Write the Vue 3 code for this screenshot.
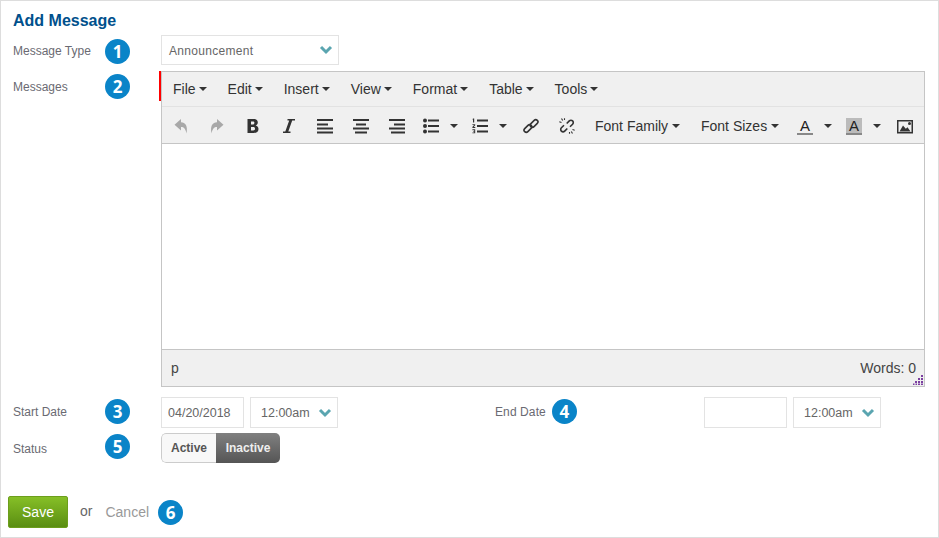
<script setup>
const menus = ['File', 'Edit', 'Insert', 'View', 'Format', 'Table', 'Tools']
</script>

<template>
  <div class="page">
    <h1 class="title">Add Message</h1>

    <div class="row row-type">
      <label class="label">Message Type</label>
      <span class="badge">1</span>
      <div class="select select-type">
        <span>Announcement</span>
        <svg class="chev" viewBox="0 0 14 10"><path d="M2 2l5 5 5-5" /></svg>
      </div>
    </div>

    <div class="row row-editor">
      <label class="label">Messages</label>
      <span class="badge">2</span>
      <div class="editor">
        <div class="menubar">
          <span v-for="m in menus" :key="m" class="menu">{{ m }}<i class="caret"></i></span>
        </div>
        <div class="toolbar">
          <span class="btn off">
            <svg viewBox="0 0 16 16"><path d="M8 1L1.500 6.800 8 12.500V9c3 0 4.500 1.800 5.500 6.500C15 8 12.500 4.500 8 4.300z" /></svg>
          </span>
          <span class="btn off">
            <svg viewBox="0 0 16 16"><path d="M8 1l6.500 5.800L8 12.500V9c-3 0-4.500 1.800-5.500 6.500C1 8 3.500 4.500 8 4.300z" /></svg>
          </span>
          <span class="btn">
            <svg viewBox="0 0 16 16"><path fill-rule="evenodd" d="M2.500 1h6c2.800 0 4.300 1.300 4.300 3.500 0 1.400-.8 2.500-2.100 3 1.700.4 2.800 1.700 2.800 3.400 0 2.600-1.900 4.100-4.800 4.100H2.500zM6 3.600v2.900h1.800c1 0 1.600-.6 1.600-1.500S8.800 3.600 7.800 3.600zM6 9v3.400h2.200c1.200 0 1.800-.7 1.800-1.700S9.400 9 8.200 9z" /></svg>
          </span>
          <span class="btn">
            <svg viewBox="0 0 16 16"><path d="M6.500 1H14v1.500H6.500zM2 13.500h7.500V15H2zM8.200 2.500h3L7.300 13.500h-3z" /></svg>
          </span>
          <span class="btn">
            <svg viewBox="0 0 16 16"><path d="M0 1h16v2H0zM0 5.500h11v2H0zM0 9.500h16v2H0zM0 13.500h16v2H0z" /></svg>
          </span>
          <span class="btn">
            <svg viewBox="0 0 16 16"><path d="M0 1h16v2H0zM3 5.500h10v2H3zM0 9.500h16v2H0zM2 13.500h12v2H2z" /></svg>
          </span>
          <span class="btn">
            <svg viewBox="0 0 16 16"><path d="M0 1h16v2H0zM5 5.500h11v2H5zM0 9.500h16v2H0zM2 13.500h14v2H2z" /></svg>
          </span>
          <span class="btn split list-bullet">
            <svg viewBox="0 0 16 16"><circle cx="2" cy="2.500" r="2" /><circle cx="2" cy="8" r="2" /><circle cx="2" cy="13.500" r="2" /><path d="M5 1.500h11v2H5zM5 7h11v2H5zM5 12.500h11v2H5z" /></svg>
            <i class="caret"></i>
          </span>
          <span class="btn split list-number">
            <svg viewBox="0 0 16 16"><path d="M1 .5h1.200v4H1V1.500H.4zM.4 6.200h2.800v1L1.700 9h1.600v.9H.4v-.9L2 7.100H.4zM.4 11.300h2.800v3.900H.4v-.8h1.800v-.8H1v-.7h1.200v-.7H.4zM5 1.500h11v2H5zM5 7h11v2H5zM5 12.500h11v2H5z" /></svg>
            <i class="caret"></i>
          </span>
          <span class="btn">
            <svg class="line" viewBox="0 0 16 16">
              <rect x="0.400" y="8.300" width="9" height="4.400" rx="2.200" transform="rotate(-45 4.900 10.500)" />
              <rect x="6.600" y="3.300" width="9" height="4.400" rx="2.200" transform="rotate(-45 11.100 5.500)" />
            </svg>
          </span>
          <span class="btn">
            <svg class="line" viewBox="0 0 16 16">
              <path d="M5 7.200L2.400 9.800a2.300 2.300 0 0 0 3.300 3.300l2.600-2.600M7.700 5.500l2.600-2.600a2.300 2.300 0 0 1 3.300 3.300L11 8.800" />
              <path d="M2.500.5l1.200 2M.3 3.800l2.200.7M5.500.3v1.700M13.500 15.500l-1.200-2M15.700 12.200l-2.200-.7M10.500 15.700V14" stroke-width="1.100" />
            </svg>
          </span>
          <span class="drop drop-family">Font Family<i class="caret"></i></span>
          <span class="drop drop-sizes">Font Sizes<i class="caret"></i></span>
          <span class="btn color color-fore"><b class="letter">A</b><i class="caret"></i></span>
          <span class="btn color color-back"><b class="letter shade">A</b><i class="caret"></i></span>
          <span class="btn">
            <svg viewBox="0 0 16 16"><path fill-rule="evenodd" d="M0 2h16v13.500H0zM1.500 3.500v10.500h13V3.500z" /><circle cx="12.500" cy="5.500" r="1.500" /><path d="M2.500 13.500l3.500-6 2.800 3.200 1.700-1.400 3 4.200z" /></svg>
          </span>
        </div>
        <div class="body"></div>
        <div class="statusbar">
          <span class="path">p</span>
          <span class="words">Words: 0</span>
          <svg class="grip" viewBox="0 0 10 10"><path d="M8 0h2v2H8zM5 3h2v2H5zM8 3h2v2H8zM2 6h2v2H2zM5 6h2v2H5zM8 6h2v2H8zM0 8.500h1.500V10H0zM2.500 8.500H4V10H2.500zM5 8.500h2V10H5zM8 8.500h2V10H8z" /></svg>
        </div>
      </div>
    </div>

    <div class="row row-dates">
      <label class="label">Start Date</label>
      <span class="badge">3</span>
      <input class="date" type="text" value="04/20/2018" />
      <div class="select select-time">
        <span>12:00am</span>
        <svg class="chev" viewBox="0 0 14 10"><path d="M2 2l5 5 5-5" /></svg>
      </div>
      <div class="end">
        <label class="label end-label">End Date</label>
        <span class="badge">4</span>
      </div>
      <input class="date" type="text" value="" />
      <div class="select select-time">
        <span>12:00am</span>
        <svg class="chev" viewBox="0 0 14 10"><path d="M2 2l5 5 5-5" /></svg>
      </div>
    </div>

    <div class="row row-status">
      <label class="label">Status</label>
      <span class="badge">5</span>
      <div class="toggle">
        <span class="opt">Active</span>
        <span class="opt on">Inactive</span>
      </div>
    </div>

    <div class="actions">
      <button class="save" type="button">Save</button>
      <span class="or">or</span>
      <a class="cancel">Cancel</a>
      <span class="badge">6</span>
    </div>
  </div>
</template>

<style>
html,
body {
  margin: 0;
  background: #fff;
}
</style>

<style scoped>
.page {
  box-sizing: border-box;
  width: 939px;
  height: 538px;
  border: 1px solid #ddd;
  padding: 0 0 0 12px;
  font-family: "Liberation Sans", Arial, sans-serif;
  color: #666;
  overflow: hidden;
}

.title {
  margin: 0;
  padding-top: 11px;
  height: 23px;
  font-size: 16px;
  line-height: 17px;
  font-weight: bold;
  color: #00508c;
}

.row {
  display: flex;
  align-items: flex-start;
}

.label {
  width: 92px;
  font-size: 12px;
  line-height: 32px;
  color: #6a6a72;
}

.badge {
  flex: none;
  box-sizing: border-box;
  width: 25px;
  height: 25px;
  margin-top: 3px;
  border-radius: 50%;
  background: #0a84c8;
  color: #fff;
  font-family: "Open Sans", sans-serif;
  font-size: 17px;
  font-weight: 700;
  line-height: 25px;
  text-align: center;
}

.row > .badge {
  margin-right: 31px;
}

.row-type > .badge {
  margin-top: 4px;
}

.select {
  box-sizing: border-box;
  height: 30px;
  display: flex;
  align-items: center;
  justify-content: space-between;
  border: 1px solid #e3e3e3;
  background: #fff;
  font-size: 12px;
  color: #666;
}

.select-type {
  width: 178px;
  padding: 0 5px 0 7px;
  letter-spacing: 0.3px;
}

.select-type span {
  margin-top: 2px;
}

.select-time {
  width: 88px;
  margin-left: 6px;
  padding: 0 5px 0 10px;
  font-size: 12.5px;
}

.chev {
  width: 14px;
  height: 10px;
  fill: none;
  stroke: #5aa5b0;
  stroke-width: 3;
}

.row-type {
  height: 36px;
}

.editor {
  box-sizing: border-box;
  position: relative;
  width: 764px;
  height: 316px;
  border: 1px solid #c5c5c5;
  display: flex;
  flex-direction: column;
  color: #333;
}

.editor::before {
  content: "";
  position: absolute;
  left: -3px;
  top: -1px;
  width: 2px;
  height: 30px;
  background: #f00;
}

.menubar {
  flex: none;
  height: 35px;
  box-sizing: border-box;
  display: flex;
  align-items: center;
  gap: 21px;
  padding-left: 11px;
  background: #f0f0f0;
  border-bottom: 1px solid #e2e2e2;
  font-size: 14px;
}

.menu {
  display: flex;
  align-items: center;
  gap: 3px;
}

.caret {
  display: inline-block;
  width: 0;
  height: 0;
  border-left: 4px solid transparent;
  border-right: 4px solid transparent;
  border-top: 4px solid #333;
}

.toolbar {
  flex: none;
  height: 37px;
  box-sizing: border-box;
  display: flex;
  align-items: center;
  padding: 2px 0 0 1px;
  background: #f0f0f0;
  border-bottom: 1px solid #c5c5c5;
  font-size: 14px;
}

.btn {
  flex: none;
  width: 36px;
  height: 34px;
  display: flex;
  align-items: center;
  justify-content: center;
}

.btn svg {
  width: 16px;
  height: 16px;
  fill: #333;
}

.btn svg.line {
  fill: none;
  stroke: #333;
  stroke-width: 1.6;
}

.btn.off svg {
  fill: #a8a8a8;
}

.split {
  justify-content: flex-start;
}

.list-bullet {
  width: 48px;
  padding-left: 8px;
  box-sizing: border-box;
}

.list-number {
  width: 50px;
  padding-left: 9px;
  box-sizing: border-box;
}

.split .caret {
  margin-left: 11px;
}

.drop {
  flex: none;
  display: flex;
  align-items: center;
  gap: 2px;
}

.drop-family {
  margin-left: 10px;
  width: 106px;
  gap: 4px;
}

.drop-sizes {
  width: 96px;
}

.drop-sizes .caret {
  margin-left: 2px;
}

.color {
  justify-content: flex-start;
  box-sizing: border-box;
}

.color-fore {
  width: 49px;
}

.color-back {
  width: 41px;
}

.letter {
  flex: none;
  box-sizing: border-box;
  width: 16px;
  height: 17px;
  font-size: 15px;
  font-weight: normal;
  line-height: 15px;
  text-align: center;
  color: #222;
  border-bottom: 2px solid #888;
}

.shade {
  background: #bbb;
}

.color .caret {
  margin-left: 11px;
}

.body {
  flex: 1;
  background: #fff;
}

.statusbar {
  flex: none;
  position: relative;
  height: 37px;
  box-sizing: border-box;
  display: flex;
  align-items: center;
  justify-content: space-between;
  padding: 0 8px 0 9px;
  background: #f0f0f0;
  border-top: 1px solid #c5c5c5;
  font-size: 14px;
  color: #444;
}

.grip {
  position: absolute;
  right: 1px;
  bottom: 1px;
  width: 10px;
  height: 10px;
  fill: #7b3fa0;
}

.row-dates {
  margin-top: 10px;
  height: 36px;
}

.row-dates > .label {
  line-height: 30px;
}

.row-dates > .badge {
  margin-top: 2px;
}

.row-status > .badge {
  margin-top: 1px;
}

.date {
  box-sizing: border-box;
  width: 83px;
  height: 31px;
  padding: 0 6px;
  border: 1px solid #e3e3e3;
  outline: none;
  font-family: inherit;
  font-size: 12.5px;
  color: #666;
}

.row-dates .select-time {
  height: 31px;
}

.end {
  display: flex;
  align-items: flex-start;
  margin-left: 157px;
  width: 209px;
}

.end-label {
  width: auto;
  margin-right: 6px;
  letter-spacing: 0.1px;
  line-height: 30px;
}

.end .badge {
  margin-top: 2px;
}

.toggle {
  display: flex;
  box-sizing: border-box;
  width: 119px;
  height: 30px;
  border-radius: 5px;
  overflow: hidden;
  font-size: 12px;
  font-weight: bold;
  line-height: 28px;
  text-align: center;
}

.opt {
  box-sizing: border-box;
  width: 55px;
  background: #f8f8f8;
  border: 1px solid #ccc;
  border-right: none;
  border-radius: 5px 0 0 5px;
  color: #555;
}

.opt.on {
  width: 64px;
  border: none;
  border-radius: 0;
  line-height: 30px;
  background: linear-gradient(#808080, #555);
  color: #eee;
}

.actions {
  display: flex;
  align-items: center;
  margin: 31px 0 0 -5px;
}

.save {
  width: 60px;
  height: 32px;
  padding: 0;
  border: 1px solid #6c9e1c;
  border-radius: 2px;
  background: linear-gradient(#86bf27, #5a8e12);
  color: #fff;
  font-family: inherit;
  font-size: 14px;
}

.or {
  margin-left: 12px;
  font-size: 14px;
  color: #666;
  position: relative;
  top: -1px;
}

.cancel {
  margin-left: 13px;
  font-size: 14px;
  color: #999;
}

.actions .badge {
  margin: 0 0 0 9px;
}
</style>
